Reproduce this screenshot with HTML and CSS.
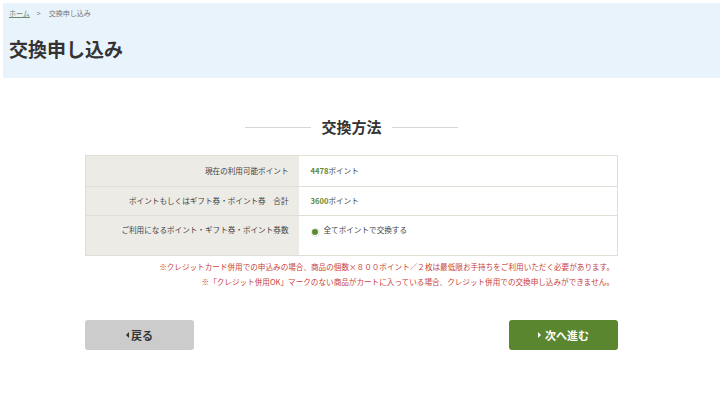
FILE: index.html
```html
<!DOCTYPE html>
<html lang="ja">
<head>
<meta charset="utf-8">
<link rel="stylesheet" href="styles.css">
</head>
<body>
<div class="page">
  <header class="hero">
    <nav class="crumbs"><a href="#" class="crumb-link">ホーム</a><span class="crumb-sep">&gt;</span><span>交換申し込み</span></nav>
    <h1 class="title">交換申し込み</h1>
  </header>
  <main class="content">
    <h2 class="section-title"><span class="line"></span><span class="section-text">交換方法</span><span class="line"></span></h2>
    <table class="info">
      <tr class="r1"><th>現在の利用可能ポイント</th><td><b class="num">4478</b>ポイント</td></tr>
      <tr class="r2"><th>ポイントもしくはギフト券・ポイント券　合計</th><td><b class="num">3600</b>ポイント</td></tr>
      <tr class="r3"><th>ご利用になるポイント・ギフト券・ポイント券数</th><td><span class="radio"><span class="dot"></span></span>全てポイントで交換する</td></tr>
    </table>
    <div class="notes">
      <p>※クレジットカード併用での申込みの場合、商品の個数×８００ポイント／２枚は最低限お手持ちをご利用いただく必要があります。</p>
      <p>※「クレジット併用OK」マークのない商品がカートに入っている場合、クレジット併用での交換申し込みができません。</p>
    </div>
    <div class="actions">
      <a href="#" class="btn btn-back"><span class="tri-left"></span>戻る</a>
      <a href="#" class="btn btn-next"><span class="tri-right"></span>次へ進む</a>
    </div>
  </main>
</div>
</body>
</html>
```
FILE: styles.css
```css
* { box-sizing: border-box; }
html, body { margin: 0; padding: 0; background: #fff; }
body {
  font-family: "Noto Sans CJK JP", "Noto Sans", sans-serif;
  color: #333;
}
.page { padding: 3px 4px 0 3px; }
.hero {
  background: #e9f3fc;
  height: 75px;
  padding: 5px 6px 0;
}
.crumbs {
  font-size: 7px;
  line-height: 10px;
  color: #777;
  display: flex;
  align-items: center;
}
.crumb-link { color: #6f8a6a; text-decoration: underline; }
.crumb-sep { margin: 0 8px 0 7px; }
.title {
  margin: 18px 0 0;
  font-size: 19px;
  line-height: 26px;
  font-weight: 700;
  color: #333;
}
.content {
  width: 533px;
  margin-left: 82px;
  padding-top: 39px;
}
.section-title {
  margin: 0;
  display: flex;
  align-items: center;
  justify-content: center;
  font-size: 15px;
  line-height: 20px;
  font-weight: 700;
  color: #333;
}
.line { width: 66px; height: 1px; background: #d8d6d0; }
.section-text { margin: 0 10px; }
.info {
  margin-top: 18px;
  width: 533px;
  border-collapse: collapse;
  font-size: 7.6px;
  border: 1px solid #e2ded5;
}
.info th, .info td {
  border-top: 1px solid #e2ded5;
  vertical-align: top;
  padding-top: 10px;
  line-height: 10px;
}
.info th {
  width: 213px;
  background: #edebe6;
  text-align: right;
  font-weight: 400;
  padding-right: 10px;
  color: #444;
}
.info td { background: #fff; padding-left: 12px; color: #444; }
.r1 th, .r1 td { height: 31px; }
.r2 th, .r2 td { height: 29px; padding-top: 9px; }
.r3 th, .r3 td { height: 40px; padding-top: 9px; }
.num { color: #5f8a34; font-weight: 700; }
.radio {
  display: inline-flex;
  width: 9px; height: 9px;
  border-radius: 50%;
  border: 1px solid #dde2e6;
  background: #fff;
  align-items: center;
  justify-content: center;
  vertical-align: -2px;
  margin-right: 4px;
}
.dot { width: 6px; height: 6px; border-radius: 50%; background: #5a8c2f; }
.notes {
  margin-top: 3px;
  text-align: right;
  font-size: 7.6px;
  line-height: 15px;
  color: #c8423a;
  padding-right: 4px;
}
.notes p { margin: 0; }
.actions {
  margin-top: 31px;
  display: flex;
  justify-content: space-between;
}
.btn {
  width: 109px;
  height: 30px;
  border-radius: 3px;
  display: flex;
  align-items: center;
  justify-content: center;
  font-size: 11px;
  font-weight: 700;
  text-decoration: none;
}
.btn-back { background: #cccccc; color: #333; }
.btn-next { background: #5a8630; color: #fff; }
.tri-left {
  width: 0; height: 0;
  border-top: 3px solid transparent;
  border-bottom: 3px solid transparent;
  border-right: 3px solid #333;
  margin-right: 2px;
}
.tri-right {
  width: 0; height: 0;
  border-top: 3px solid transparent;
  border-bottom: 3px solid transparent;
  border-left: 3px solid #fff;
  margin-right: 4px;
}
```
